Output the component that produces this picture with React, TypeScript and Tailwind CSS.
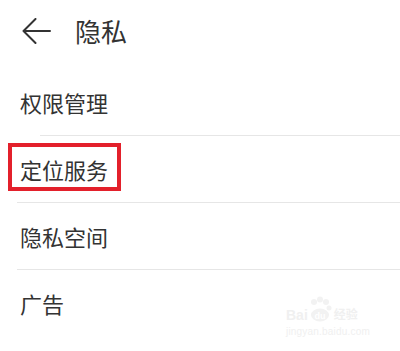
import React from "react";

const font = { fontFamily: '"Noto Sans CJK SC", "Noto Sans", sans-serif' };

function Row({ label, children, divider = "ml-[17px]" }: { label: string; children?: React.ReactNode; divider?: string }) {
  return (
    <div>
      <div className={`relative h-[66px] flex items-center pl-[20px] text-[22px] leading-none text-[#333333]`}>
        {children}
        <span>{label}</span>
      </div>
      <div className={`h-px bg-[#e6e6e6] ${divider}`} />
    </div>
  );
}

export default function App() {
  return (
    <div className="relative w-[400px] h-[351px] bg-white overflow-hidden" style={font}>
      <div className="h-[69px] flex items-center pb-[7px]">
        <svg className="ml-[22px]" width="29" height="26" viewBox="0 0 29 26" fill="none">
          <path d="M28 13H1.5M13.5 1L1.5 13L13.5 25" stroke="#333333" strokeWidth="2" strokeLinecap="round" strokeLinejoin="round" />
        </svg>
        <span className="ml-[24px] text-[26px] leading-none text-[#333333]">隐私</span>
      </div>
      <Row label="权限管理" divider="ml-[40px]" />
      <Row label="定位服务">
        <div className="absolute left-[8px] top-[7px] w-[113px] h-[48px] border-4 border-[#e3202b]" />
      </Row>
      <Row label="隐私空间" />
      <div className="h-[66px] flex items-center pl-[20px] text-[22px] leading-none text-[#333333]">
        <span>广告</span>
      </div>
      <div className="absolute left-[286px] top-[296px] text-[#f0f0f0] select-none" style={{ fontFamily: '"Liberation Sans", sans-serif' }}>
        <div className="flex items-end h-[26px]">
          <span className="text-[14px] font-bold leading-none">Bai</span>
          <svg width="26" height="26" viewBox="0 0 26 26" className="-ml-[1px]">
            <circle cx="7" cy="6" r="3" fill="#f2f2f2" />
            <circle cx="13" cy="3.5" r="3" fill="#f2f2f2" />
            <circle cx="19" cy="6" r="3" fill="#f2f2f2" />
            <circle cx="22" cy="12" r="2.5" fill="#f2f2f2" />
            <ellipse cx="13" cy="19" rx="9" ry="6.5" fill="#f2f2f2" />
            <text x="13" y="22.5" fontSize="9" fontWeight="bold" textAnchor="middle" fill="#ffffff" fontFamily="Liberation Sans, sans-serif">du</text>
          </svg>
          <span className="text-[12px] font-bold leading-none ml-[1px] mb-[2px]" style={font}>经验</span>
        </div>
        <div className="text-[10px] leading-none mt-[5px] tracking-[0.2px]">jingyan.baidu.com</div>
      </div>
    </div>
  );
}
